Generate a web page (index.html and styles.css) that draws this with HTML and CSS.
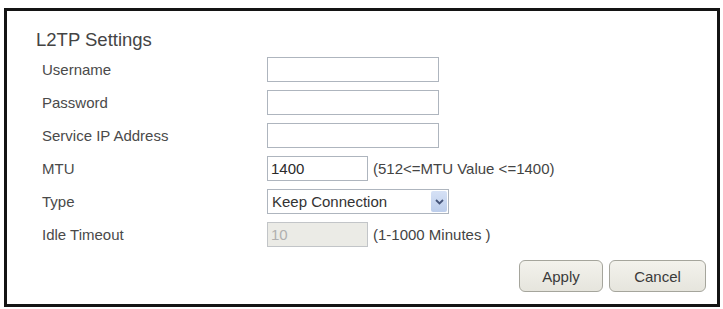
FILE: index.html
```html
<!DOCTYPE html>
<html lang="en">
<head>
    <meta charset="UTF-8">
    <meta name="viewport" content="width=device-width, initial-scale=1.0">
    <title>L2TP Settings</title>
    <link rel="stylesheet" href="styles.css">
</head>
<body>
    <div class="panel">
        <h1>L2TP Settings</h1>

        <div class="form">
            <label for="username">Username</label>
            <div class="field"><input type="text" id="username" class="wide"></div>

            <label for="password">Password</label>
            <div class="field"><input type="password" id="password" class="wide"></div>

            <label for="serviceIp">Service IP Address</label>
            <div class="field"><input type="text" id="serviceIp" class="wide"></div>

            <label for="mtu">MTU</label>
            <div class="field">
                <input type="text" id="mtu" class="short" value="1400">
                <span class="hint">(512&lt;=MTU Value &lt;=1400)</span>
            </div>

            <label for="type">Type</label>
            <div class="field">
                <div class="select">
                    <select id="type">
                        <option>Keep Connection</option>
                        <option>On Demand</option>
                        <option>Manual</option>
                    </select>
                    <span class="arrow">
                        <svg width="9" height="6" viewBox="0 0 9 6"><path d="M1 1 L4.5 4.5 L8 1" fill="none" stroke="#46557a" stroke-width="1.8"/></svg>
                    </span>
                </div>
            </div>

            <label for="idle">Idle Timeout</label>
            <div class="field">
                <input type="text" id="idle" class="short" value="10" disabled>
                <span class="hint">(1-1000 Minutes )</span>
            </div>
        </div>

        <div class="actions">
            <button class="btn-apply">Apply</button>
            <button class="btn-cancel">Cancel</button>
        </div>
    </div>
</body>
</html>
```

FILE: styles.css
```css
body {
    margin: 0;
    font-family: "Liberation Sans", Arial, sans-serif;
    background: #fff;
}
.panel {
    box-sizing: border-box;
    width: 716px;
    height: 299px;
    margin: 8px 0 0 4px;
    border: 3px solid #141414;
    padding: 18px 11px 12px 29px;
    display: flex;
    flex-direction: column;
}
h1 {
    margin: 0;
    font-size: 18.5px;
    font-weight: normal;
    line-height: 22px;
    color: #444;
}
.form {
    margin-top: 2px;
    padding-left: 6px;
    display: grid;
    grid-template-columns: 225px auto;
    grid-auto-rows: 33px;
    align-items: center;
}
label {
    font-size: 15px;
    color: #4a4a4a;
}
.field {
    display: flex;
    align-items: center;
}
input[type="text"], input[type="password"] {
    box-sizing: border-box;
    height: 25px;
    border: 1px solid #aeb5be;
    padding: 0 3px;
    font-family: inherit;
    font-size: 15px;
    color: #2a2a2a;
    background: #fff;
    outline: none;
}
input.wide {
    width: 172px;
}
input.short {
    width: 101px;
}
input:disabled {
    background: #ebebe6;
    border-color: #c2c5c8;
    color: #b0b0b0;
}
.hint {
    margin-left: 5px;
    font-size: 15px;
    color: #444;
}
.select {
    box-sizing: border-box;
    width: 182px;
    height: 25px;
    border: 1px solid #aeb5be;
    display: flex;
    background: #fff;
}
.select select {
    appearance: none;
    -webkit-appearance: none;
    flex: 1;
    border: none;
    background: transparent;
    padding: 0 4px;
    font-family: inherit;
    font-size: 15px;
    color: #333;
    outline: none;
}
.arrow {
    width: 16px;
    margin: 1px;
    background: linear-gradient(#d6e1f5, #bccdeb);
    border-radius: 2px;
    display: flex;
    align-items: center;
    justify-content: center;
}
.actions {
    margin-top: 9px;
    display: flex;
    justify-content: flex-end;
    gap: 6px;
}
button {
    height: 32px;
    border: 1px solid #a5a59c;
    border-radius: 6px;
    background: linear-gradient(#f3f2ec, #e6e5dd);
    font-family: inherit;
    font-size: 15px;
    color: #3a3a3a;
    cursor: pointer;
}
.btn-apply {
    width: 84px;
}
.btn-cancel {
    width: 97px;
}
```
